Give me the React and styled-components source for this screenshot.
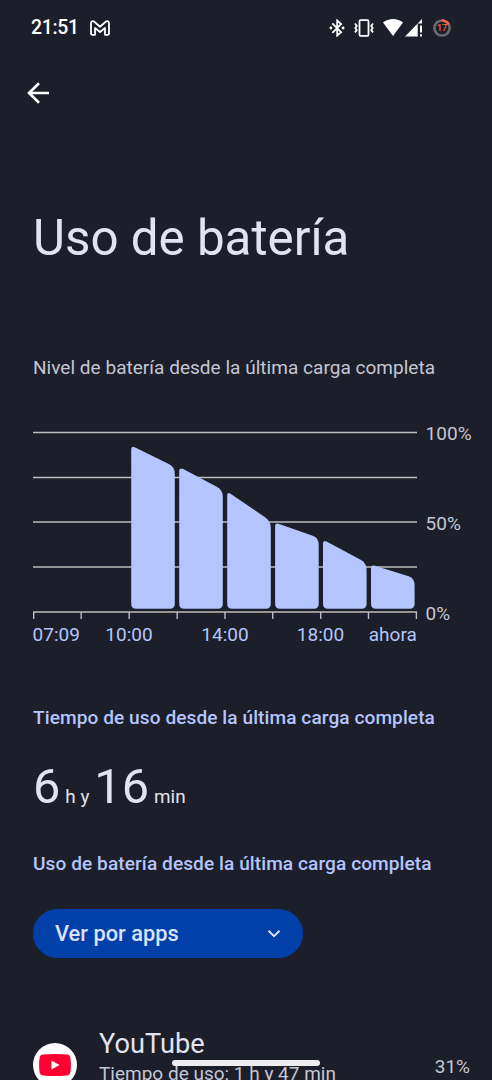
import React from "react";
import styled, { createGlobalStyle } from "styled-components";

const GlobalStyle = createGlobalStyle`
  * {
    box-sizing: border-box;
  }

  body {
    margin: 0;
    background-color: #1c1e29;
    overflow: hidden;
  }
`;

const Screen = styled.div`
  width: 492px;
  height: 1080px;
  overflow: hidden;
  position: relative;
  background-color: #1c1e29;
  color: #e2e3f1;
  font-family: Roboto, sans-serif;
`;

const StatusBar = styled.header`
  display: flex;
  align-items: center;
  height: 55px;
  padding: 0 41px 0 31px;
`;

const Clock = styled.span`
  color: #fff;
  font-size: 19.4px;
  font-weight: 500;
  letter-spacing: -0.3px;
  width: 59px;
`;

const StatusIcons = styled.div`
  display: flex;
  align-items: center;
  margin-left: auto;
`;

const Gap = styled.span`
  width: ${props => props.$size}px;
`;

const Toolbar = styled.nav`
  display: flex;
  align-items: center;
  height: 75px;
  padding-left: 26px;
`;

const BackButton = styled.button`
  display: flex;
  padding: 0;
  border: 0;
  background: none;
`;

const Content = styled.main`
  padding: 0 0 0 33px;
`;

const Title = styled.h1`
  margin: 79px 0 0;
  font-size: 49.3px;
  font-weight: 400;
  line-height: 58px;
  white-space: nowrap;
`;

const Summary = styled.p`
  margin: 89px 0 0;
  color: #c5c6d4;
  font-size: 19px;
  line-height: 24px;
  letter-spacing: 0.03px;
  white-space: nowrap;
`;

const Chart = styled.svg`
  display: block;
  margin-top: 44px;
`;

const ChartLabel = styled.text`
  fill: ${props => props.$axis === "x" ? "#b4c5ff" : "#c5c6d4"};
  font-size: 19px;
  letter-spacing: 0.05px;
`;

const SectionTitle = styled.h2`
  margin: ${props => props.$top}px 0 0;
  color: #b4c5ff;
  font-size: 19.1px;
  font-weight: 500;
  line-height: 24px;
  letter-spacing: 0.07px;
  white-space: nowrap;
`;

const Duration = styled.div`
  display: flex;
  align-items: baseline;
  height: 60px;
  margin-top: 27px;
  line-height: 60px;
`;

const Amount = styled.span`
  font-size: 48.6px;
`;

const Unit = styled.span`
  font-size: 18.9px;
  margin: 0 5px;
`;

const Spinner = styled.button`
  display: flex;
  align-items: center;
  justify-content: space-between;
  width: 270px;
  height: 49px;
  margin-top: 33px;
  padding: 0 22px;
  border: 0;
  border-radius: 25px;
  background-color: #0040a8;
  color: #dbe1ff;
  font-family: inherit;
  font-size: 21.8px;
  font-weight: 500;
`;

const AppRow = styled.div`
  display: flex;
  align-items: flex-start;
  margin-top: 70px;
  padding-right: 22px;
`;

const AppIcon = styled.div`
  display: flex;
  align-items: center;
  justify-content: center;
  width: 44px;
  height: 44px;
  margin: 15px 22px 0 0;
  border-radius: 50%;
  background-color: #fff;
`;

const AppText = styled.div`
  flex: 1;
`;

const AppName = styled.div`
  font-size: 27.2px;
  line-height: 32px;
`;

const AppUsage = styled.div`
  color: #c5c6d4;
  font-size: 19px;
  line-height: 26px;
  margin-top: 1px;
  white-space: nowrap;
`;

const Percent = styled.div`
  margin-top: 27px;
  color: #c5c6d4;
  font-size: 19px;
  line-height: 24px;
`;

const HomeIndicator = styled.div`
  position: absolute;
  left: 172px;
  bottom: 14px;
  width: 148px;
  height: 6px;
  border-radius: 3px;
  background-color: #eeedf0;
`;

const GmailIcon = () => (
  <svg width="20" height="16" viewBox="0 0 20 16" fill="none" stroke="#fff" strokeWidth="1.8" strokeLinejoin="round">
    <path d="M1 3.2C1 1 3 .7 4.3 1.7L10 6.7l5.7-5C17 .7 19 1 19 3.2V13.6Q19 14.8 17.900 14.800H15V8L10 12 5 8v6.800H2.100Q1 14.800 1 13.600Z" />
  </svg>
);

const BluetoothIcon = () => (
  <svg width="16" height="18" viewBox="0 0 16 18" fill="none" stroke="#fff" strokeWidth="1.8">
    <path d="M3.300 4.300l8.800 8.900L8.200 16.500V1.500l3.900 3.600-8.800 8.800" />
    <circle cx="1.900" cy="9" r="1.400" fill="#fff" stroke="none" />
    <circle cx="14.100" cy="9" r="1.400" fill="#fff" stroke="none" />
  </svg>
);

const VibrateIcon = () => (
  <svg width="20" height="18" viewBox="0 0 20 18" fill="none" stroke="#fff" strokeWidth="1.8">
    <rect x="5.5" y="1.2" width="9" height="15.6" rx="1" />
    <path d="M.9 4.500l1.900 2.200-1.500 2.200 1.500 2.200-1.900 2.200M19.100 4.500l-1.900 2.200 1.500 2.200-1.500 2.200 1.900 2.200" />
  </svg>
);

const WifiIcon = () => (
  <svg width="20" height="17" viewBox="0 0 20 17" fill="#fff">
    <path d="M0 3.600C5.500-1.200 14.500-1.200 20 3.600L10 17Z" />
  </svg>
);

const SignalIcon = () => (
  <svg width="18" height="18" viewBox="0 0 18 18" fill="#fff">
    <path d="M0 17.500L17 0v4.500h-4.300v13Z" />
    <path d="M15 6.500h2v7h-2zM15 15.300h2v2.200h-2z" />
  </svg>
);

const BatteryIcon = () => (
  <svg width="18" height="18" viewBox="0 0 18 18">
    <circle cx="9" cy="9" r="7.6" fill="none" stroke="#6c6d74" strokeWidth="2.5" />
    <path d="M9 1.400A7.600 7.600 0 0 1 15.700 5.400" fill="none" stroke="#f3604b" strokeWidth="2.5" />
    <text x="9" y="12.3" fill="#f3604b" fontSize="9" fontWeight="500" textAnchor="middle">17</text>
  </svg>
);

const BackIcon = () => (
  <svg width="24" height="24" viewBox="0 0 24 24" fill="none" stroke="#fff" strokeWidth="2.6">
    <path d="M23 12H3.500M13 2.200L3 12l10 9.800" />
  </svg>
);

const ChevronIcon = () => (
  <svg width="14" height="10" viewBox="0 0 14 10" fill="none" stroke="#dbe1ff" strokeWidth="2">
    <path d="M1.500 1.700L7 7.200l5.500-5.500" />
  </svg>
);

const YouTubeIcon = () => (
  <svg width="32" height="22" viewBox="0 0 32 22">
    <path d="M4 .6Q16-.5 28 .6 31 .9 31.400 4 32.400 11 31.400 18 31 21.100 28 21.400 16 22.500 4 21.400 1 21.100.6 18-.4 11 .6 4 1 .9 4 .6Z" fill="#ff0033" />
    <path d="M12.500 6.400v9.200L20.500 11Z" fill="#fff" />
  </svg>
);

const gridLines = [8.5, 53.5, 98, 143, 188];
const ticks = [0.7, 48.2, 96.2, 144.2, 192, 239.7, 287.7, 335.5, 383.4];

// y of the left and right edge of every two hour slot
const bars = [
  { x: 98.2, left: 21.5, right: 43 },
  { x: 146.2, left: 43, right: 66 },
  { x: 194.2, left: 67.5, right: 97 },
  { x: 242.1, left: 98.5, right: 114 },
  { x: 290, left: 115.5, right: 139 },
  { x: 338, left: 140.5, right: 154 }
];

const barPath = ({ x, left, right }) => {
  const w = 43.6;
  const end = x + w;
  const bottom = 184.8;
  const slope = (right - left) / w;

  return `M${x} ${bottom - 5}V${left + 4}Q${x} ${left} ${x + 4} ${left + 4 * slope}
    L${end - 6} ${right - 6 * slope}Q${end} ${right} ${end} ${right + 7}
    V${bottom - 5}Q${end} ${bottom} ${end - 5} ${bottom}H${x + 5}Q${x} ${bottom} ${x} ${bottom - 5}Z`;
}

const BatteryChart = () => (
  <Chart width="459" height="226" viewBox="0 0 459 226">
    {gridLines.map(y =>
      <path key={`line-${y}`} d={`M0 ${y}H384`} stroke="#bcbdbd" strokeWidth="1.4" />
    )}
    {ticks.map(x =>
      <path key={`tick-${x}`} d={`M${x} 188V195`} stroke="#bcbdbd" strokeWidth="1.4" />
    )}
    {bars.map(bar =>
      <path key={`bar-${bar.x}`} d={barPath(bar)} fill="#b4c5ff" />
    )}
    <ChartLabel x="392.5" y="16">100%</ChartLabel>
    <ChartLabel x="392.5" y="105.5">50%</ChartLabel>
    <ChartLabel x="392.5" y="195.5">0%</ChartLabel>
    <ChartLabel $axis="x" x="-0.5" y="217">07:09</ChartLabel>
    <ChartLabel $axis="x" x="96" y="217" textAnchor="middle">10:00</ChartLabel>
    <ChartLabel $axis="x" x="192" y="217" textAnchor="middle">14:00</ChartLabel>
    <ChartLabel $axis="x" x="287.5" y="217" textAnchor="middle">18:00</ChartLabel>
    <ChartLabel $axis="x" x="384" y="217" textAnchor="end">ahora</ChartLabel>
  </Chart>
);

const App = () => (
  <Screen>
    <GlobalStyle />
    <StatusBar>
      <Clock>21:51</Clock>
      <GmailIcon />
      <StatusIcons>
        <BluetoothIcon />
        <Gap $size={9} />
        <VibrateIcon />
        <Gap $size={9} />
        <WifiIcon />
        <Gap $size={2} />
        <SignalIcon />
        <Gap $size={10} />
        <BatteryIcon />
      </StatusIcons>
    </StatusBar>
    <Toolbar>
      <BackButton aria-label="Atrás"><BackIcon /></BackButton>
    </Toolbar>
    <Content>
      <Title>Uso de batería</Title>
      <Summary>Nivel de batería desde la última carga completa</Summary>
      <BatteryChart />
      <SectionTitle $top={56}>Tiempo de uso desde la última carga completa</SectionTitle>
      <Duration>
        <Amount>6</Amount>
        <Unit>h y</Unit>
        <Amount>16</Amount>
        <Unit>min</Unit>
      </Duration>
      <SectionTitle $top={35}>Uso de batería desde la última carga completa</SectionTitle>
      <Spinner>
        Ver por apps
        <ChevronIcon />
      </Spinner>
      <AppRow>
        <AppIcon><YouTubeIcon /></AppIcon>
        <AppText>
          <AppName>YouTube</AppName>
          <AppUsage>Tiempo de uso: 1 h y 47 min</AppUsage>
        </AppText>
        <Percent>31%</Percent>
      </AppRow>
    </Content>
    <HomeIndicator />
  </Screen>
);

export default App;
